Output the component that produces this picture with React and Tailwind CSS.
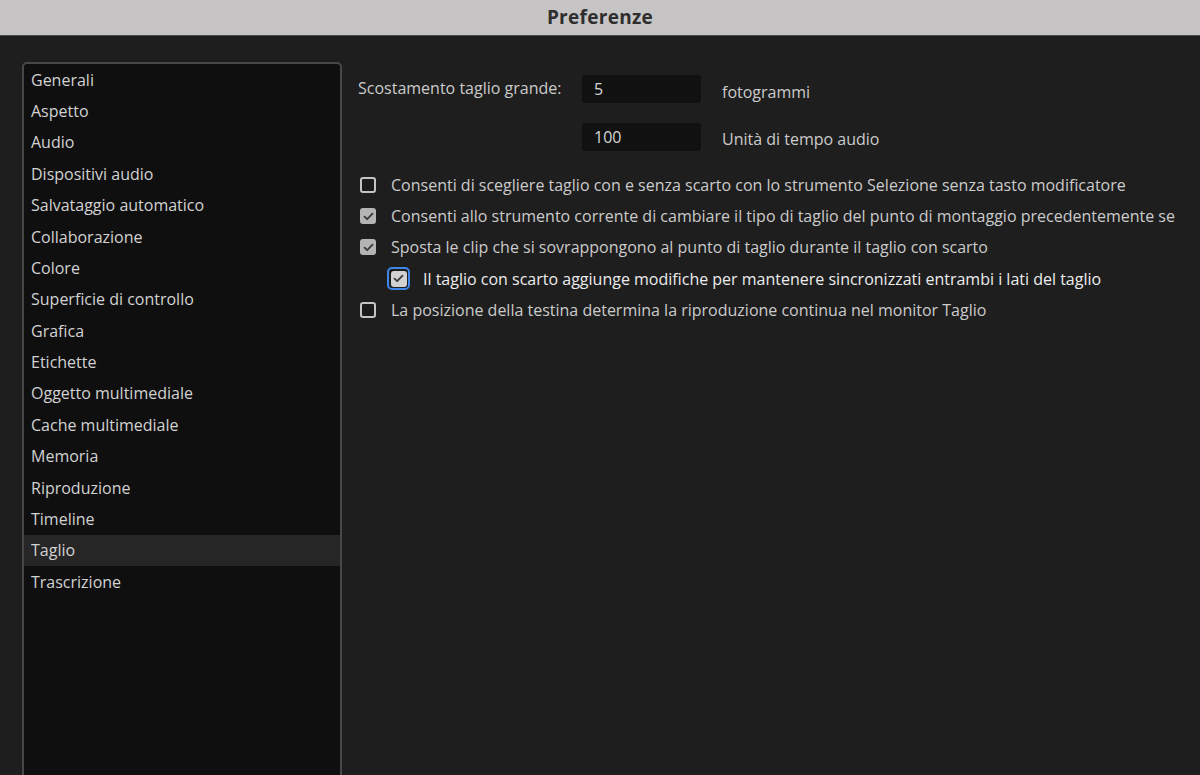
import React from 'react';

const categories = [
    'Generali',
    'Aspetto',
    'Audio',
    'Dispositivi audio',
    'Salvataggio automatico',
    'Collaborazione',
    'Colore',
    'Superficie di controllo',
    'Grafica',
    'Etichette',
    'Oggetto multimediale',
    'Cache multimediale',
    'Memoria',
    'Riproduzione',
    'Timeline',
    'Taglio',
    'Trascrizione',
];

// second label runs past the window edge in the original, only "se" shows
const options = [
    { label: 'Consenti di scegliere taglio con e senza scarto con lo strumento Selezione senza tasto modificatore', checked: false },
    { label: 'Consenti allo strumento corrente di cambiare il tipo di taglio del punto di montaggio precedentemente se', checked: true },
    { label: 'Sposta le clip che si sovrappongono al punto di taglio durante il taglio con scarto', checked: true },
    { label: 'Il taglio con scarto aggiunge modifiche per mantenere sincronizzati entrambi i lati del taglio', checked: true, indent: true, focus: true },
    { label: 'La posizione della testina determina la riproduzione continua nel monitor Taglio', checked: false },
];

const Check = ({ checked, focus }) => {
    const box = checked ? (
        <div className={`w-4 h-4 rounded-[3px] flex items-center justify-center ${focus ? 'bg-[#d2d2d2]' : 'bg-[#b4b4b4]'}`}>
            <svg width="11" height="9" viewBox="0 0 11 9" fill="none">
                <path d="M1.5 4.6 L4.2 7.2 L9.5 1.6" stroke="#3a3a3a" strokeWidth="1.8" strokeLinecap="round" strokeLinejoin="round" />
            </svg>
        </div>
    ) : (
        <div className="w-4 h-4 rounded-[3px] border-2 border-[#c4c4c4] bg-[#1b1b1b]" />
    );

    if (focus) {
        return (
            <div className="w-[23px] h-[23px] rounded-[5px] border-2 border-[#3f86ea] flex items-center justify-center -ml-[2px] mr-[-2px]">
                {box}
            </div>
        );
    }
    return <div className="ml-[2px]">{box}</div>;
};

export default function App() {
    return (
        <div className="w-[1200px] h-[775px] overflow-hidden bg-[#1e1e1e] flex flex-col font-['Open_Sans',sans-serif]">
            {/* title bar */}
            <div className="h-[36px] flex-shrink-0 bg-[#c6c4c4] border-b border-[#4a4a4a] flex items-center justify-center">
                <span className="text-[19px] font-bold text-[#2e2e2e] tracking-[0.3px]">Preferenze</span>
            </div>

            <div className="flex flex-1 min-h-0 pt-[26px]">
                {/* sidebar */}
                <div className="ml-[22px] w-[320px] flex-shrink-0 h-[760px] rounded-t-[5px] border-2 border-[#484848] bg-[#0f0f0f]">
                    {categories.map(name => (
                        <div
                            key={name}
                            className={`h-[31.375px] flex items-center pl-[7px] text-[16px] text-[#d2d2d2] ${name === 'Taglio' ? 'bg-[#262626]' : ''}`}
                        >
                            {name}
                        </div>
                    ))}
                </div>

                {/* content */}
                <div className="flex-1 min-w-0 ml-[16px] pt-[13px] text-[16px] text-[#cbcbcb] whitespace-nowrap">
                    <div className="flex items-start">
                        <div className="w-[224px] pt-[1px]">Scostamento taglio grande:</div>
                        <div className="w-[119px] h-[28px] rounded-[3px] bg-[#111111] flex items-center pl-[12px] text-[#d6d6d6]">5</div>
                        <div className="ml-[21px] pt-[5px]">fotogrammi</div>
                    </div>
                    <div className="flex items-start mt-[19px]">
                        <div className="w-[224px]" />
                        <div className="w-[119px] h-[28px] rounded-[3px] bg-[#111111] flex items-center pl-[12px] text-[#d6d6d6]">100</div>
                        <div className="ml-[21px] pt-[4px]">Unità di tempo audio</div>
                    </div>

                    <div className="mt-[18px]">
                        {options.map(opt => (
                            <div
                                key={opt.label}
                                className={`h-[31.375px] flex items-center ${opt.indent ? 'pl-[31px]' : ''}`}
                            >
                                <Check checked={opt.checked} focus={opt.focus} />
                                <span className={`ml-[15px] ${opt.focus ? 'text-[#ececec]' : ''}`}>{opt.label}</span>
                            </div>
                        ))}
                    </div>
                </div>
            </div>
        </div>
    );
}
